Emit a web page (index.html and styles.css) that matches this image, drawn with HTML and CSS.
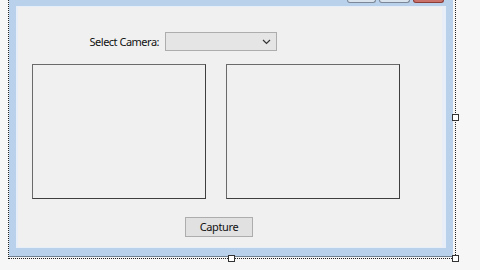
FILE: index.html
```html
<!DOCTYPE html>
<html>
<head>
<meta charset="utf-8">
<link rel="stylesheet" href="styles.css">
</head>
<body>
<div class="stage">
  <div class="window">
    <div class="titlebar">
      <div class="caption-btn"></div>
      <div class="caption-btn"></div>
      <div class="caption-btn close"></div>
    </div>
    <div class="client">
      <div class="camera-row">
        <div class="label"><span>Select Camera:</span></div>
        <div class="combo">
          <svg class="chevron" width="9" height="6" viewBox="0 0 9 6"><polyline points="1,1 4.5,4.5 8,1" fill="none" stroke="#333" stroke-width="1.2"/></svg>
        </div>
      </div>
      <div class="panels">
        <div class="panel"></div>
        <div class="panel"></div>
      </div>
      <div class="button-row">
        <div class="button">Capture</div>
      </div>
    </div>
  </div>
  <div class="selection"></div>
  <div class="handle h-right"></div>
  <div class="handle h-bottom"></div>
  <div class="handle h-corner"></div>
</div>
</body>
</html>
```
FILE: styles.css
```css
html, body {
  margin: 0;
  padding: 0;
  background: #f6f6f6;
  font-family: "Noto Sans", "Open Sans", "DejaVu Sans", sans-serif;
  font-size: 11px;
  color: #000;
}
.stage {
  position: relative;
  width: 480px;
  height: 270px;
  overflow: hidden;
}
.window {
  margin-left: 9px;
  width: 444px;
  box-sizing: border-box;
  background: #b9d1ea;
  padding: 0 7px 8px 7px;
  border-bottom: 1px solid #6f7f90;
}
.titlebar {
  height: 6px;
  display: flex;
  justify-content: flex-end;
  align-items: flex-start;
  gap: 3px;
  padding-right: 2px;
}
.caption-btn {
  width: 29px;
  height: 2px;
  box-sizing: content-box;
  background: #d9e3ee;
  border: 1px solid #7c8898;
  border-top: none;
  border-radius: 0 0 3px 3px;
}
.caption-btn:first-child { width: 27px; }
.caption-btn.close {
  background: #c9716a;
  border-color: #8a3c36;
}
.client {
  box-sizing: border-box;
  height: 242px;
  background: #f0f0f0;
  border: 1px solid #e7eef7;
  border-left-width: 2px;
  border-right-width: 4px;
  padding-top: 25px;
}
.camera-row {
  display: flex;
  align-items: center;
  gap: 6px;
  padding-left: 72px;
  height: 19px;
}
.label {
  width: 69px;
  display: flex;
  justify-content: flex-end;
  white-space: nowrap;
  line-height: 19px;
  letter-spacing: -0.5px;
  color: #111;
}
.combo {
  width: 112px;
  height: 19px;
  box-sizing: border-box;
  background: #e5e5e5;
  border: 1px solid #adadad;
  display: flex;
  align-items: center;
  justify-content: flex-end;
  padding-right: 5px;
}
.panels {
  display: flex;
  gap: 20px;
  padding-left: 14px;
  margin-top: 13px;
}
.panel {
  width: 174px;
  height: 135px;
  box-sizing: border-box;
  border: 1px solid #3f3f3f;
  border-top-color: #6a6a6a;
  border-left-color: #6a6a6a;
  background: #f0f0f0;
}
.button-row {
  padding-left: 167px;
  margin-top: 18px;
}
.button {
  width: 68px;
  height: 20px;
  box-sizing: border-box;
  background: #e1e1e1;
  border: 1px solid #adadad;
  text-align: center;
  line-height: 18px;
  letter-spacing: -0.4px;
  color: #111;
}
.selection {
  position: absolute;
  left: 8px;
  top: -10px;
  width: 448px;
  height: 269px;
  box-sizing: border-box;
  border: 1px dotted #222;
  pointer-events: none;
}
.handle {
  position: absolute;
  width: 7px;
  height: 7px;
  box-sizing: border-box;
  background: #fff;
  border: 1px solid #333;
}
.h-right { left: 452px; top: 114px; }
.h-bottom { left: 228px; top: 255px; }
.h-corner { left: 452px; top: 255px; }
```
